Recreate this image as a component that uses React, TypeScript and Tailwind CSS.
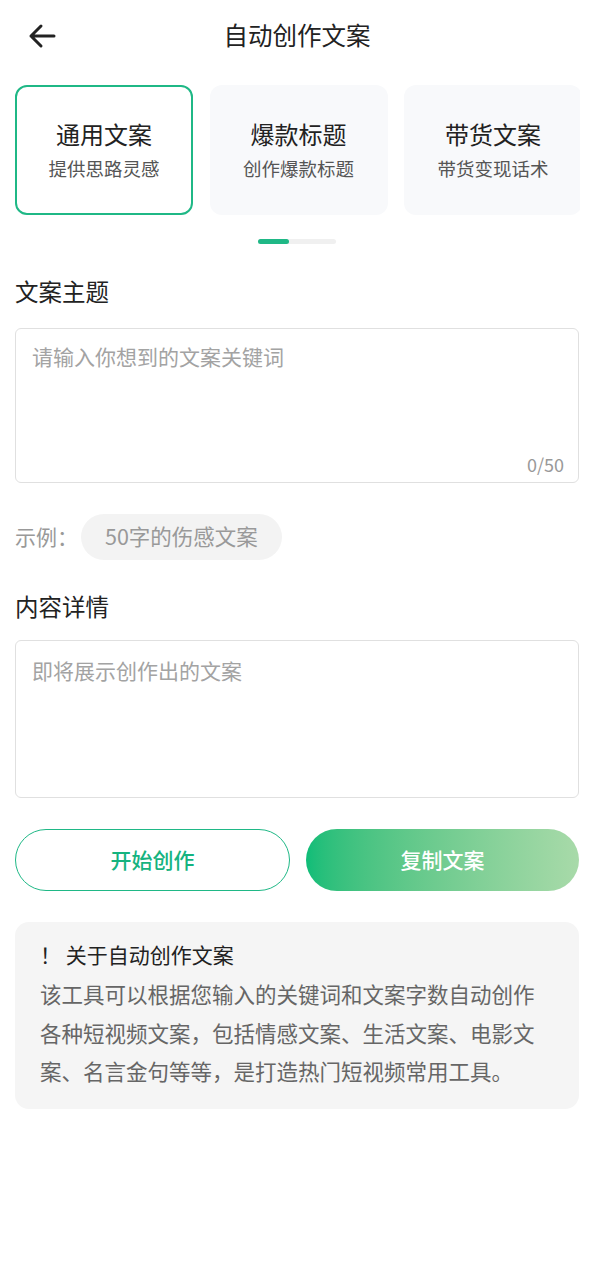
import React from "react";

const font = { fontFamily: '"Noto Sans CJK SC", "Noto Sans", sans-serif' };

export default function App() {
  return (
    <div className="w-[594px] h-[1280px] bg-white text-[#222]" style={font}>
      {/* header */}
      <div className="relative h-[70px] flex items-center justify-center">
        <svg className="absolute left-[27px] top-[22px]" width="30" height="28" viewBox="0 0 30 28" fill="none">
          <path d="M27 14H4M14 4L4 14l10 10" stroke="#222" strokeWidth="3" strokeLinecap="round" strokeLinejoin="round" />
        </svg>
        <div className="text-[24.5px] leading-none text-[#222]">自动创作文案</div>
      </div>

      {/* cards */}
      <div className="mt-[15px] ml-[15px] w-[565px] overflow-hidden">
        <div className="flex gap-[16.5px] w-[700px]">
          <div className="w-[178px] h-[130px] shrink-0 rounded-[12px] border-2 border-[#1fb886] bg-white flex flex-col items-center justify-center">
            <div className="text-[24px] leading-none text-[#222]">通用文案</div>
            <div className="mt-[13px] text-[18.5px] leading-none text-[#555]">提供思路灵感</div>
          </div>
          <div className="w-[178px] h-[130px] shrink-0 rounded-[12px] bg-[#f8f9fb] flex flex-col items-center justify-center">
            <div className="text-[24px] leading-none text-[#222]">爆款标题</div>
            <div className="mt-[13px] text-[18.5px] leading-none text-[#555]">创作爆款标题</div>
          </div>
          <div className="w-[178px] h-[130px] shrink-0 rounded-[12px] bg-[#f8f9fb] flex flex-col items-center justify-center">
            <div className="text-[24px] leading-none text-[#222]">带货文案</div>
            <div className="mt-[13px] text-[18.5px] leading-none text-[#555]">带货变现话术</div>
          </div>
        </div>
      </div>

      {/* indicator */}
      <div className="mt-[24px] flex justify-center">
        <div className="w-[78px] h-[5px] rounded-full bg-[#f0f0f0] flex">
          <div className="w-[31px] h-[5px] rounded-full bg-[#1fb886]" />
        </div>
      </div>

      <div className="px-[15px]">
        <div className="mt-[36px] text-[23.5px] leading-none text-[#222]">文案主题</div>
        <div className="mt-[24px] relative h-[155px] rounded-[6px] border border-[#e0e0e0]">
          <div className="absolute left-[16px] top-[17px] text-[21px] leading-none text-[#a3a3a3]">请输入你想到的文案关键词</div>
          <div className="absolute right-[14px] bottom-[9px] text-[18px] leading-none text-[#999]">0/50</div>
        </div>

        <div className="mt-[31px] flex items-center">
          <div className="text-[21px] leading-none text-[#999]">示例：</div>
          <div className="ml-[3px] h-[46px] px-[24px] rounded-full bg-[#f3f3f3] flex items-center text-[21.5px] text-[#999]">50字的伤感文案</div>
        </div>

        <div className="mt-[35px] text-[23.5px] leading-none text-[#222]">内容详情</div>
        <div className="mt-[22px] relative h-[158px] rounded-[6px] border border-[#e0e0e0]">
          <div className="absolute left-[16px] top-[19px] text-[21px] leading-none text-[#a3a3a3]">即将展示创作出的文案</div>
        </div>

        <div className="mt-[31px] flex gap-[16px]">
          <div className="flex-1 h-[62px] rounded-full border border-[#1fb886] flex items-center justify-center text-[21px] font-medium text-[#15b37f]">开始创作</div>
          <div className="flex-1 h-[62px] rounded-full bg-gradient-to-r from-[#0dbd78] to-[#a8daa9] flex items-center justify-center text-[21px] font-medium text-white">复制文案</div>
        </div>

        <div className="mt-[31px] rounded-[14px] bg-[#f5f5f5] pl-[25px] pr-[40px] pt-[18px] pb-[18px]">
          <div className="text-[21px] leading-[28px] text-[#222]">！ 关于自动创作文案</div>
          <div className="mt-[7px] text-[21.5px] leading-[38.5px] text-[#666]">
            该工具可以根据您输入的关键词和文案字数自动创作各种短视频文案，包括情感文案、生活文案、电影文案、名言金句等等，是打造热门短视频常用工具。
          </div>
        </div>
      </div>
    </div>
  );
}
